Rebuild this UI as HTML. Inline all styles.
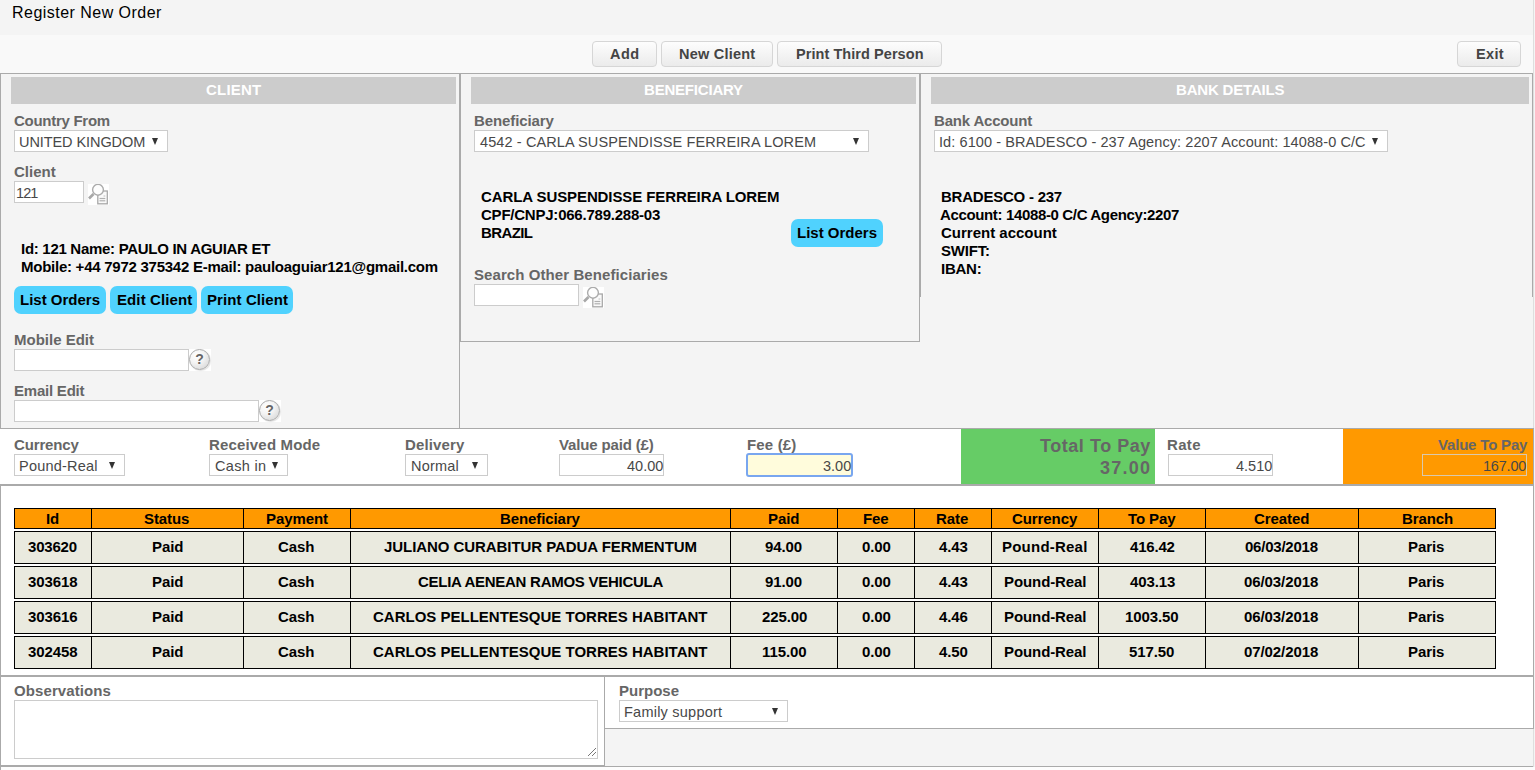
<!DOCTYPE html>
<html><head><meta charset="utf-8">
<style>
*{box-sizing:border-box;margin:0;padding:0}
html,body{width:1535px;height:770px;overflow:hidden;background:#f4f4f4;font-family:"Liberation Sans",sans-serif}
.a{position:absolute}
.x{position:absolute;white-space:nowrap;line-height:24px}
.bx{position:absolute;background:#fff;border:1px solid #ccc}
.hdr{position:absolute;top:77px;height:27px;background:#ccc}
.tb{position:absolute;top:41px;height:26px;border:1px solid #d6d6d6;border-radius:4px;background:linear-gradient(#fdfdfd,#ebebeb)}
.cb{position:absolute;height:28px;border-radius:7px;background:#50d2fe}
.row{position:absolute;left:14px;width:1482px;border:1px solid #000;background:#eaeadf}
.th{background:#ff9900}
.cl{position:absolute;top:0;bottom:0;width:1px;background:#000}
.arr{position:absolute;width:0;height:0;border-left:3.5px solid transparent;border-right:3.5px solid transparent;border-top:7.5px solid #333}
.help{position:absolute;width:22px;height:22px;background:#fff}
.help b{position:absolute;left:0;top:0;width:21px;height:21px;border-radius:50%;border:1.5px solid #aaa;background:radial-gradient(circle at 35% 30%,#fff 0%,#f4f4f4 40%,#d0d0d0 100%);box-shadow:1px 1px 1px rgba(0,0,0,.12)}
.help b:after{content:"?";position:absolute;left:0;right:0;top:1px;text-align:center;font:bold 14px/17px "Liberation Sans",sans-serif;color:#666}
.ln{position:absolute;background:#aaa}
</style></head><body>
<!-- toolbar band -->
<div class="a" style="left:0;top:35px;width:1533px;height:38px;background:#f9f9f9"></div>
<div class="tb" style="left:592px;width:65px"></div>
<div class="tb" style="left:661px;width:112px"></div>
<div class="tb" style="left:777px;width:165px"></div>
<div class="tb" style="left:1457px;width:64px"></div>
<div class="ln" style="left:0;top:73px;width:1533px;height:1px"></div>

<!-- CLIENT panel -->
<div class="ln" style="left:0;top:73px;width:1px;height:697px"></div>
<div class="ln" style="left:459px;top:73px;width:1px;height:355px"></div>
<div class="hdr" style="left:11px;width:445px"></div>
<div class="bx" style="left:14px;top:130px;width:154px;height:22px"></div><div class="arr" style="left:152px;top:138px"></div>
<div class="bx" style="left:14px;top:181px;width:70px;height:22px"></div>
<svg class="a" style="left:88px;top:184px" width="21" height="21" viewBox="0 0 21 21"><rect width="21" height="21" fill="#fff"/><rect x="9.8" y="7" width="9.5" height="12.8" fill="#fafafa" stroke="#a8a8a8" stroke-width="1.3"/><line x1="11.5" y1="14.5" x2="17.3" y2="14.5" stroke="#b0b0b0" stroke-width="1.2"/><line x1="11.5" y1="16.8" x2="17.3" y2="16.8" stroke="#b0b0b0" stroke-width="1.2"/><line x1="15.5" y1="12" x2="17.3" y2="12" stroke="#c0c0c0"/><line x1="1" y1="14.5" x2="5.5" y2="10" stroke="#a8a8a8" stroke-width="2.6"/><circle cx="10" cy="5.8" r="5.4" fill="#fdfdfd" stroke="#ababab" stroke-width="1.4"/></svg>
<div class="cb" style="left:14px;top:286px;width:92px"></div>
<div class="cb" style="left:110px;top:286px;width:87px"></div>
<div class="cb" style="left:201px;top:286px;width:92px"></div>
<div class="bx" style="left:14px;top:349px;width:175px;height:22px"></div>
<div class="help" style="left:189px;top:349px"><b></b></div>
<div class="bx" style="left:14px;top:400px;width:245px;height:22px"></div>
<div class="help" style="left:259px;top:400px"><b></b></div>

<!-- BENEFICIARY panel -->
<div class="ln" style="left:460px;top:73px;width:1px;height:269px"></div>
<div class="ln" style="left:919px;top:73px;width:1px;height:269px"></div>
<div class="ln" style="left:460px;top:341px;width:460px;height:1px"></div>
<div class="hdr" style="left:471px;width:445px"></div>
<div class="bx" style="left:474px;top:130px;width:395px;height:22px"></div><div class="arr" style="left:853px;top:138px"></div>
<div class="cb" style="left:791px;top:219px;width:92px"></div>
<div class="bx" style="left:474px;top:284px;width:105px;height:22px"></div>
<svg class="a" style="left:583px;top:287px" width="21" height="21" viewBox="0 0 21 21"><rect width="21" height="21" fill="#fff"/><rect x="9.8" y="7" width="9.5" height="12.8" fill="#fafafa" stroke="#a8a8a8" stroke-width="1.3"/><line x1="11.5" y1="14.5" x2="17.3" y2="14.5" stroke="#b0b0b0" stroke-width="1.2"/><line x1="11.5" y1="16.8" x2="17.3" y2="16.8" stroke="#b0b0b0" stroke-width="1.2"/><line x1="15.5" y1="12" x2="17.3" y2="12" stroke="#c0c0c0"/><line x1="1" y1="14.5" x2="5.5" y2="10" stroke="#a8a8a8" stroke-width="2.6"/><circle cx="10" cy="5.8" r="5.4" fill="#fdfdfd" stroke="#ababab" stroke-width="1.4"/></svg>

<!-- BANK panel -->
<div class="ln" style="left:920px;top:73px;width:1px;height:224px"></div>
<div class="ln" style="left:1532px;top:73px;width:1px;height:224px"></div>
<div class="hdr" style="left:931px;width:598px"></div>
<div class="bx" style="left:934px;top:130px;width:454px;height:22px"></div><div class="arr" style="left:1372px;top:138px"></div>

<!-- CURRENCY band -->
<div class="a" style="left:0;top:428px;width:1533px;height:58px;background:#fff"></div>
<div class="ln" style="left:0;top:428px;width:1534px;height:1px"></div>
<div class="ln" style="left:0;top:484px;width:1534px;height:2px"></div>
<div class="bx" style="left:14px;top:454px;width:111px;height:22px"></div><div class="arr" style="left:109px;top:462px"></div>
<div class="bx" style="left:209px;top:454px;width:79px;height:22px"></div><div class="arr" style="left:272px;top:462px"></div>
<div class="bx" style="left:405px;top:454px;width:83px;height:22px"></div><div class="arr" style="left:472px;top:462px"></div>
<div class="bx" style="left:559px;top:454px;width:105px;height:22px"></div>
<div class="a" style="left:746px;top:453px;width:107px;height:24px;border:2px solid #79a6ef;border-radius:3px;background:#fffcdc"></div>
<div class="a" style="left:961px;top:429px;width:194px;height:55px;background:#66cc66"></div>
<div class="bx" style="left:1168px;top:454px;width:105px;height:22px"></div>
<div class="a" style="left:1343px;top:429px;width:190px;height:55px;background:#ff9900"></div>
<div class="a" style="left:1422px;top:454px;width:105px;height:22px;border:1px solid #d9c9ad"></div>

<!-- TABLE area -->
<div class="a" style="left:1px;top:486px;width:1532px;height:189px;background:#fff"></div>
<div class="row th" style="top:508px;height:21px"><div class="cl" style="left:76px"></div><div class="cl" style="left:228px"></div><div class="cl" style="left:335px"></div><div class="cl" style="left:715px"></div><div class="cl" style="left:822px"></div><div class="cl" style="left:899px"></div><div class="cl" style="left:976px"></div><div class="cl" style="left:1083px"></div><div class="cl" style="left:1190px"></div><div class="cl" style="left:1343px"></div></div>
<div class="row " style="top:531px;height:33px"><div class="cl" style="left:76px"></div><div class="cl" style="left:228px"></div><div class="cl" style="left:335px"></div><div class="cl" style="left:715px"></div><div class="cl" style="left:822px"></div><div class="cl" style="left:899px"></div><div class="cl" style="left:976px"></div><div class="cl" style="left:1083px"></div><div class="cl" style="left:1190px"></div><div class="cl" style="left:1343px"></div></div>
<div class="row " style="top:566px;height:33px"><div class="cl" style="left:76px"></div><div class="cl" style="left:228px"></div><div class="cl" style="left:335px"></div><div class="cl" style="left:715px"></div><div class="cl" style="left:822px"></div><div class="cl" style="left:899px"></div><div class="cl" style="left:976px"></div><div class="cl" style="left:1083px"></div><div class="cl" style="left:1190px"></div><div class="cl" style="left:1343px"></div></div>
<div class="row " style="top:601px;height:33px"><div class="cl" style="left:76px"></div><div class="cl" style="left:228px"></div><div class="cl" style="left:335px"></div><div class="cl" style="left:715px"></div><div class="cl" style="left:822px"></div><div class="cl" style="left:899px"></div><div class="cl" style="left:976px"></div><div class="cl" style="left:1083px"></div><div class="cl" style="left:1190px"></div><div class="cl" style="left:1343px"></div></div>
<div class="row " style="top:636px;height:33px"><div class="cl" style="left:76px"></div><div class="cl" style="left:228px"></div><div class="cl" style="left:335px"></div><div class="cl" style="left:715px"></div><div class="cl" style="left:822px"></div><div class="cl" style="left:899px"></div><div class="cl" style="left:976px"></div><div class="cl" style="left:1083px"></div><div class="cl" style="left:1190px"></div><div class="cl" style="left:1343px"></div></div>


<!-- bottom -->
<div class="ln" style="left:0;top:675px;width:1534px;height:2px"></div>
<div class="a" style="left:1px;top:677px;width:604px;height:88px;background:#fff"></div>
<div class="a" style="left:605px;top:677px;width:928px;height:51px;background:#fff"></div>
<div class="ln" style="left:604px;top:677px;width:1px;height:89px"></div>
<div class="ln" style="left:605px;top:728px;width:929px;height:1px"></div>
<div class="ln" style="left:1533px;top:428px;width:1px;height:301px"></div><div class="a" style="left:1533px;top:0;width:1px;height:428px;background:#dedede"></div><div class="a" style="left:1533px;top:729px;width:1px;height:41px;background:#dedede"></div>
<div class="ln" style="left:0;top:765px;width:605px;height:2px"></div><div class="ln" style="left:605px;top:766px;width:928px;height:1px"></div>
<div class="a" style="left:1px;top:767px;width:1534px;height:3px;background:#fdfdfd"></div>
<div class="bx" style="left:14px;top:700px;width:584px;height:59px"></div>
<svg class="a" style="left:585px;top:746px" width="12" height="12" viewBox="0 0 12 12"><line x1="3" y1="10" x2="11" y2="2" stroke="#777"/><line x1="7" y1="10" x2="11" y2="6" stroke="#777"/></svg>
<div class="bx" style="left:619px;top:700px;width:169px;height:22px"></div><div class="arr" style="left:772px;top:708px"></div>
<div class="x" style="left:12px;top:1px;font-size:16px;font-weight:normal;letter-spacing:0.471px;color:#000">Register New Order</div>
<div class="x" style="left:610px;top:42px;font-size:14.5px;font-weight:bold;letter-spacing:0.5px;color:#444">Add</div>
<div class="x" style="left:679px;top:42px;font-size:14.5px;font-weight:bold;letter-spacing:0.222px;color:#444">New Client</div>
<div class="x" style="left:796px;top:42px;font-size:14.5px;font-weight:bold;letter-spacing:0.059px;color:#444">Print Third Person</div>
<div class="x" style="left:1476px;top:42px;font-size:14.5px;font-weight:bold;letter-spacing:0.333px;color:#444">Exit</div>
<div class="x" style="left:206px;top:78px;font-size:15px;font-weight:bold;letter-spacing:0.2px;color:#fff">CLIENT</div>
<div class="x" style="left:644px;top:78px;font-size:15px;font-weight:bold;letter-spacing:-0.2px;color:#fff">BENEFICIARY</div>
<div class="x" style="left:1176px;top:78px;font-size:15px;font-weight:bold;letter-spacing:-0.182px;color:#fff">BANK DETAILS</div>
<div class="x" style="left:14px;top:109px;font-size:15px;font-weight:bold;letter-spacing:-0.273px;color:#666">Country From</div>
<div class="x" style="left:19px;top:130px;font-size:14.5px;font-weight:normal;letter-spacing:-0.077px;color:#484848">UNITED KINGDOM</div>
<div class="x" style="left:14px;top:160px;font-size:15px;font-weight:bold;letter-spacing:0.0px;color:#666">Client</div>
<div class="x" style="left:16px;top:181px;font-size:14.5px;font-weight:normal;letter-spacing:-0.91px;color:#484848">121</div>
<div class="x" style="left:21px;top:237px;font-size:15px;font-weight:bold;letter-spacing:-0.29px;color:#000">Id: 121 Name: PAULO IN AGUIAR ET</div>
<div class="x" style="left:21px;top:255px;font-size:15px;font-weight:bold;letter-spacing:-0.255px;color:#000">Mobile: +44 7972 375342 E-mail: pauloaguiar121@gmail.com</div>
<div class="x" style="left:20px;top:288px;font-size:15px;font-weight:bold;letter-spacing:0.0px;color:#000">List Orders</div>
<div class="x" style="left:117px;top:288px;font-size:15px;font-weight:bold;letter-spacing:0.1px;color:#000">Edit Client</div>
<div class="x" style="left:207px;top:288px;font-size:15px;font-weight:bold;letter-spacing:0.091px;color:#000">Print Client</div>
<div class="x" style="left:14px;top:328px;font-size:15px;font-weight:bold;letter-spacing:0.0px;color:#666">Mobile Edit</div>
<div class="x" style="left:14px;top:379px;font-size:15px;font-weight:bold;letter-spacing:-0.222px;color:#666">Email Edit</div>
<div class="x" style="left:474px;top:109px;font-size:15px;font-weight:bold;letter-spacing:-0.1px;color:#666">Beneficiary</div>
<div class="x" style="left:480px;top:130px;font-size:14.5px;font-weight:normal;letter-spacing:0.105px;color:#484848">4542 - CARLA SUSPENDISSE FERREIRA LOREM</div>
<div class="x" style="left:481px;top:185px;font-size:15px;font-weight:bold;letter-spacing:-0.097px;color:#000">CARLA SUSPENDISSE FERREIRA LOREM</div>
<div class="x" style="left:481px;top:203px;font-size:15px;font-weight:bold;letter-spacing:-0.227px;color:#000">CPF/CNPJ:066.789.288-03</div>
<div class="x" style="left:481px;top:221px;font-size:15px;font-weight:bold;letter-spacing:-0.6px;color:#000">BRAZIL</div>
<div class="x" style="left:797px;top:221px;font-size:15px;font-weight:bold;letter-spacing:0.0px;color:#000">List Orders</div>
<div class="x" style="left:474px;top:263px;font-size:15px;font-weight:bold;letter-spacing:0.08px;color:#666">Search Other Beneficiaries</div>
<div class="x" style="left:934px;top:109px;font-size:15px;font-weight:bold;letter-spacing:-0.182px;color:#666">Bank Account</div>
<div class="x" style="left:939px;top:130px;font-size:14.5px;font-weight:normal;letter-spacing:0.086px;color:#484848">Id: 6100 - BRADESCO - 237 Agency: 2207 Account: 14088-0 C/C</div>
<div class="x" style="left:941px;top:185px;font-size:15px;font-weight:bold;letter-spacing:-0.231px;color:#000">BRADESCO - 237</div>
<div class="x" style="left:940px;top:203px;font-size:15px;font-weight:bold;letter-spacing:-0.355px;color:#000">Account: 14088-0 C/C Agency:2207</div>
<div class="x" style="left:941px;top:221px;font-size:15px;font-weight:bold;letter-spacing:0.0px;color:#000">Current account</div>
<div class="x" style="left:941px;top:239px;font-size:15px;font-weight:bold;letter-spacing:-0.2px;color:#000">SWIFT:</div>
<div class="x" style="left:941px;top:257px;font-size:15px;font-weight:bold;letter-spacing:-0.25px;color:#000">IBAN:</div>
<div class="x" style="left:14px;top:433px;font-size:15px;font-weight:bold;letter-spacing:-0.143px;color:#666">Currency</div>
<div class="x" style="left:19px;top:454px;font-size:14.5px;font-weight:normal;letter-spacing:0.222px;color:#484848">Pound-Real</div>
<div class="x" style="left:209px;top:433px;font-size:15px;font-weight:bold;letter-spacing:0.167px;color:#666">Received Mode</div>
<div class="x" style="left:215px;top:454px;font-size:14.5px;font-weight:normal;letter-spacing:0.333px;color:#484848">Cash in</div>
<div class="x" style="left:405px;top:433px;font-size:15px;font-weight:bold;letter-spacing:0.143px;color:#666">Delivery</div>
<div class="x" style="left:411px;top:454px;font-size:14.5px;font-weight:normal;letter-spacing:0.2px;color:#484848">Normal</div>
<div class="x" style="left:559px;top:433px;font-size:15px;font-weight:bold;letter-spacing:-0.154px;color:#666">Value paid (£)</div>
<div class="x" style="left:627px;top:454px;font-size:14.5px;font-weight:normal;letter-spacing:0.0px;color:#484848">40.00</div>
<div class="x" style="left:747px;top:433px;font-size:15px;font-weight:bold;letter-spacing:0.167px;color:#666">Fee (£)</div>
<div class="x" style="left:823px;top:454px;font-size:14.5px;font-weight:normal;letter-spacing:0.0px;color:#484848">3.00</div>
<div class="x" style="left:1040px;top:434px;font-size:18px;font-weight:bold;letter-spacing:0.545px;color:#666">Total To Pay</div>
<div class="x" style="left:1100px;top:456px;font-size:18px;font-weight:bold;letter-spacing:1.25px;color:#666">37.00</div>
<div class="x" style="left:1167px;top:433px;font-size:15px;font-weight:bold;letter-spacing:0.333px;color:#666">Rate</div>
<div class="x" style="left:1236px;top:454px;font-size:14.5px;font-weight:normal;letter-spacing:0.0px;color:#484848">4.510</div>
<div class="x" style="left:1438px;top:433px;font-size:15px;font-weight:bold;letter-spacing:-0.182px;color:#666">Value To Pay</div>
<div class="x" style="left:1483px;top:454px;font-size:14.5px;font-weight:normal;letter-spacing:-0.2px;color:#484848">167.00</div>
<div class="x" style="left:46px;top:507px;font-size:15px;font-weight:bold;letter-spacing:-0.091px;color:#000">Id</div>
<div class="x" style="left:144px;top:507px;font-size:15px;font-weight:bold;letter-spacing:-0.091px;color:#000">Status</div>
<div class="x" style="left:266px;top:507px;font-size:15px;font-weight:bold;letter-spacing:-0.091px;color:#000">Payment</div>
<div class="x" style="left:500px;top:507px;font-size:15px;font-weight:bold;letter-spacing:-0.091px;color:#000">Beneficiary</div>
<div class="x" style="left:768px;top:507px;font-size:15px;font-weight:bold;letter-spacing:-0.091px;color:#000">Paid</div>
<div class="x" style="left:863px;top:507px;font-size:15px;font-weight:bold;letter-spacing:-0.091px;color:#000">Fee</div>
<div class="x" style="left:936px;top:507px;font-size:15px;font-weight:bold;letter-spacing:-0.091px;color:#000">Rate</div>
<div class="x" style="left:1012px;top:507px;font-size:15px;font-weight:bold;letter-spacing:-0.091px;color:#000">Currency</div>
<div class="x" style="left:1128px;top:507px;font-size:15px;font-weight:bold;letter-spacing:-0.091px;color:#000">To Pay</div>
<div class="x" style="left:1254px;top:507px;font-size:15px;font-weight:bold;letter-spacing:-0.091px;color:#000">Created</div>
<div class="x" style="left:1402px;top:507px;font-size:15px;font-weight:bold;letter-spacing:-0.091px;color:#000">Branch</div>
<div class="x" style="left:28px;top:535px;font-size:15px;font-weight:bold;letter-spacing:-0.2px;color:#000">303620</div>
<div class="x" style="left:152px;top:535px;font-size:15px;font-weight:bold;letter-spacing:-0.091px;color:#000">Paid</div>
<div class="x" style="left:278px;top:535px;font-size:15px;font-weight:bold;letter-spacing:-0.091px;color:#000">Cash</div>
<div class="x" style="left:384px;top:535px;font-size:15px;font-weight:bold;letter-spacing:-0.062px;color:#000">JULIANO CURABITUR PADUA FERMENTUM</div>
<div class="x" style="left:765px;top:535px;font-size:15px;font-weight:bold;letter-spacing:-0.091px;color:#000">94.00</div>
<div class="x" style="left:862px;top:535px;font-size:15px;font-weight:bold;letter-spacing:-0.091px;color:#000">0.00</div>
<div class="x" style="left:939px;top:535px;font-size:15px;font-weight:bold;letter-spacing:-0.091px;color:#000">4.43</div>
<div class="x" style="left:1002px;top:535px;font-size:15px;font-weight:bold;letter-spacing:0.222px;color:#000">Pound-Real</div>
<div class="x" style="left:1130px;top:535px;font-size:15px;font-weight:bold;letter-spacing:-0.2px;color:#000">416.42</div>
<div class="x" style="left:1245px;top:535px;font-size:15px;font-weight:bold;letter-spacing:-0.222px;color:#000">06/03/2018</div>
<div class="x" style="left:1408px;top:535px;font-size:15px;font-weight:bold;letter-spacing:-0.091px;color:#000">Paris</div>
<div class="x" style="left:28px;top:570px;font-size:15px;font-weight:bold;letter-spacing:-0.091px;color:#000">303618</div>
<div class="x" style="left:152px;top:570px;font-size:15px;font-weight:bold;letter-spacing:-0.091px;color:#000">Paid</div>
<div class="x" style="left:278px;top:570px;font-size:15px;font-weight:bold;letter-spacing:-0.091px;color:#000">Cash</div>
<div class="x" style="left:418px;top:570px;font-size:15px;font-weight:bold;letter-spacing:-0.269px;color:#000">CELIA AENEAN RAMOS VEHICULA</div>
<div class="x" style="left:765px;top:570px;font-size:15px;font-weight:bold;letter-spacing:-0.091px;color:#000">91.00</div>
<div class="x" style="left:862px;top:570px;font-size:15px;font-weight:bold;letter-spacing:-0.091px;color:#000">0.00</div>
<div class="x" style="left:939px;top:570px;font-size:15px;font-weight:bold;letter-spacing:-0.091px;color:#000">4.43</div>
<div class="x" style="left:1004px;top:570px;font-size:15px;font-weight:bold;letter-spacing:-0.091px;color:#000">Pound-Real</div>
<div class="x" style="left:1130px;top:570px;font-size:15px;font-weight:bold;letter-spacing:-0.091px;color:#000">403.13</div>
<div class="x" style="left:1244px;top:570px;font-size:15px;font-weight:bold;letter-spacing:-0.091px;color:#000">06/03/2018</div>
<div class="x" style="left:1408px;top:570px;font-size:15px;font-weight:bold;letter-spacing:-0.091px;color:#000">Paris</div>
<div class="x" style="left:28px;top:605px;font-size:15px;font-weight:bold;letter-spacing:-0.091px;color:#000">303616</div>
<div class="x" style="left:152px;top:605px;font-size:15px;font-weight:bold;letter-spacing:-0.091px;color:#000">Paid</div>
<div class="x" style="left:278px;top:605px;font-size:15px;font-weight:bold;letter-spacing:-0.091px;color:#000">Cash</div>
<div class="x" style="left:373px;top:605px;font-size:15px;font-weight:bold;letter-spacing:0.0px;color:#000">CARLOS PELLENTESQUE TORRES HABITANT</div>
<div class="x" style="left:762px;top:605px;font-size:15px;font-weight:bold;letter-spacing:-0.091px;color:#000">225.00</div>
<div class="x" style="left:862px;top:605px;font-size:15px;font-weight:bold;letter-spacing:-0.091px;color:#000">0.00</div>
<div class="x" style="left:939px;top:605px;font-size:15px;font-weight:bold;letter-spacing:-0.091px;color:#000">4.46</div>
<div class="x" style="left:1004px;top:605px;font-size:15px;font-weight:bold;letter-spacing:-0.091px;color:#000">Pound-Real</div>
<div class="x" style="left:1125px;top:605px;font-size:15px;font-weight:bold;letter-spacing:-0.091px;color:#000">1003.50</div>
<div class="x" style="left:1244px;top:605px;font-size:15px;font-weight:bold;letter-spacing:-0.091px;color:#000">06/03/2018</div>
<div class="x" style="left:1408px;top:605px;font-size:15px;font-weight:bold;letter-spacing:-0.091px;color:#000">Paris</div>
<div class="x" style="left:28px;top:640px;font-size:15px;font-weight:bold;letter-spacing:-0.091px;color:#000">302458</div>
<div class="x" style="left:152px;top:640px;font-size:15px;font-weight:bold;letter-spacing:-0.091px;color:#000">Paid</div>
<div class="x" style="left:278px;top:640px;font-size:15px;font-weight:bold;letter-spacing:-0.091px;color:#000">Cash</div>
<div class="x" style="left:373px;top:640px;font-size:15px;font-weight:bold;letter-spacing:0.0px;color:#000">CARLOS PELLENTESQUE TORRES HABITANT</div>
<div class="x" style="left:762px;top:640px;font-size:15px;font-weight:bold;letter-spacing:-0.091px;color:#000">115.00</div>
<div class="x" style="left:862px;top:640px;font-size:15px;font-weight:bold;letter-spacing:-0.091px;color:#000">0.00</div>
<div class="x" style="left:939px;top:640px;font-size:15px;font-weight:bold;letter-spacing:-0.091px;color:#000">4.50</div>
<div class="x" style="left:1004px;top:640px;font-size:15px;font-weight:bold;letter-spacing:-0.091px;color:#000">Pound-Real</div>
<div class="x" style="left:1129px;top:640px;font-size:15px;font-weight:bold;letter-spacing:-0.091px;color:#000">517.50</div>
<div class="x" style="left:1244px;top:640px;font-size:15px;font-weight:bold;letter-spacing:-0.091px;color:#000">07/02/2018</div>
<div class="x" style="left:1408px;top:640px;font-size:15px;font-weight:bold;letter-spacing:-0.091px;color:#000">Paris</div>
<div class="x" style="left:14px;top:679px;font-size:15px;font-weight:bold;letter-spacing:0.091px;color:#666">Observations</div>
<div class="x" style="left:619px;top:679px;font-size:15px;font-weight:bold;letter-spacing:0.0px;color:#666">Purpose</div>
<div class="x" style="left:624px;top:700px;font-size:14.5px;font-weight:normal;letter-spacing:0.231px;color:#484848">Family support</div>
</body></html>
